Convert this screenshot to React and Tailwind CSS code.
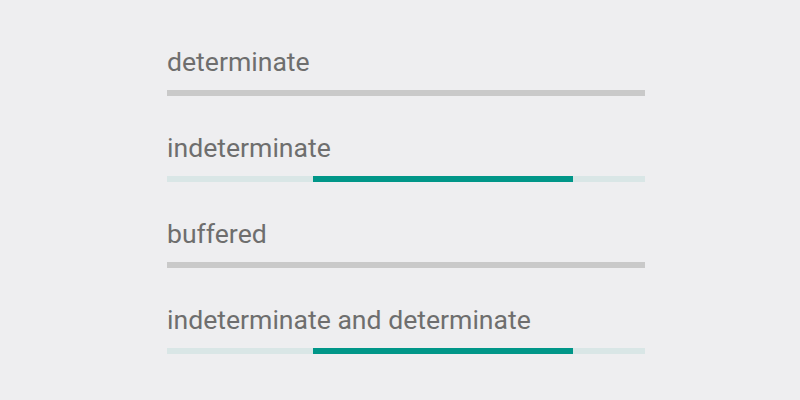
export default function App() {
  const rows = [
    { label: "determinate", type: "gray" },
    { label: "indeterminate", type: "teal" },
    { label: "buffered", type: "gray" },
    { label: "indeterminate and determinate", type: "teal" },
  ];
  return (
    <div className="w-[800px] h-[400px] bg-[#eeeef0] pl-[167px] pt-[46px]" style={{ fontFamily: "Roboto, sans-serif" }}>
      <div className="flex flex-col gap-[36px] w-[478px]">
        {rows.map((r) => (
          <div key={r.label} className="flex flex-col">
            <div className="text-[26.6px] leading-[32px] text-[#6e6e6e]">{r.label}</div>
            {r.type === "gray" ? (
              <div className="mt-[12px] h-[6px] bg-[#c9c9c9]" />
            ) : (
              <div className="mt-[12px] h-[6px] bg-[#d9e6e6] flex">
                <div className="ml-[146px] w-[260px] bg-[#009688]" />
              </div>
            )}
          </div>
        ))}
      </div>
    </div>
  );
}
